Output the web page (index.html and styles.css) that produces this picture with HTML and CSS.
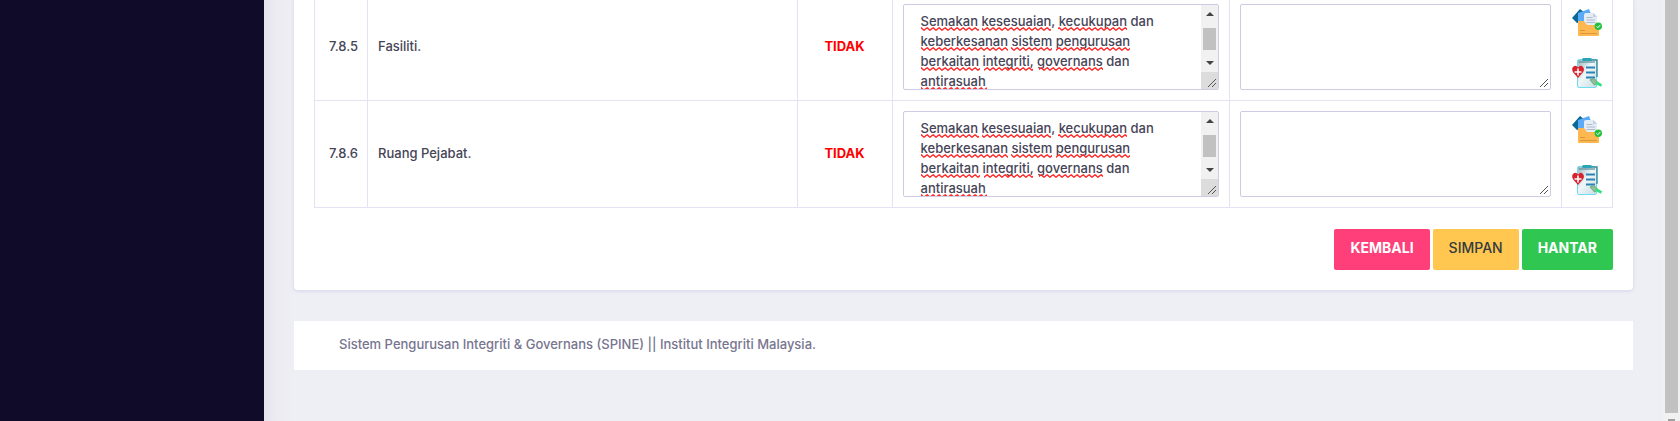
FILE: index.html
```
<!DOCTYPE html>
<html lang="ms">
<head>
<meta charset="utf-8">
<title>SPINE</title>
<link rel="stylesheet" href="styles.css">
</head>
<body>
<svg class="defs" aria-hidden="true">
  <defs>
    <pattern id="wave" width="6" height="4" patternUnits="userSpaceOnUse">
      <path d="M-1.500 .8Q0 .8 1.500 2T3 3.200T4.500 2T6 .8M0 .8Q.8 .8 1.500 2" fill="none" stroke="#f22" stroke-width="1.400"/>
    </pattern>
    <linearGradient id="sheet" x1="0" y1="0" x2="1" y2="1">
      <stop offset="0" stop-color="#8fb4bd"/><stop offset=".45" stop-color="#eef6f8"/><stop offset="1" stop-color="#c9dde3"/>
    </linearGradient>
    <symbol id="folder" viewBox="0 0 30 30">
      <path d="M0 11L8 2l5 4-3 9-5 1z" fill="#0a6796"/>
      <path d="M6 6l11-4 4 10-11 6H6z" fill="#5aaaf8"/>
      <path d="M12 8q0-2 2-2h8l3 3v11H12z" fill="#e4ecf5"/>
      <path d="M21 6l4 4h-4z" fill="#c2d0e0"/>
      <path d="M14.500 10.500h6M14.500 13h8.500M14.500 15.500h8.500" stroke="#aebccb"/>
      <path d="M6 15q0-1 1-1h5l3 4h11q1 0 1 1v9q0 1-1 1H7q-1 0-1-1z" fill="#ffb74f"/>
      <path d="M8 23.500h5M8 26.500h17" stroke="#d9963a"/>
      <circle cx="26.300" cy="19.300" r="3.700" fill="#22c03c"/>
      <path d="M24.500 19.300l1.400 1.400 2.500-2.800" fill="none" stroke="#fff"/>
    </symbol>
    <symbol id="report" viewBox="0 0 30 30">
      <rect x="5.500" y="1.500" width="19" height="28" rx="1.500" fill="url(#sheet)" stroke="#6fdcef"/>
      <path d="M7 4h16" stroke="#5f8d97" stroke-width="2" opacity=".6"/>
      <path d="M15 2h10v17" fill="none" stroke="#3b8c9c" stroke-width="1.400"/>
      <rect x="10" y="0" width="10" height="3" rx="1.500" fill="#2aa5b8"/>
      <path d="M14 9.500h9M14 14.500h9M14 19.500h9" stroke="#2a83b5" stroke-width="2"/>
      <path d="M6 20L1.200 14.500Q-.8 11 1 9q3-2.500 5 .5Q8.500 6.500 11 9q2 2.500-.2 5.500z" fill="#d8232f"/>
      <path d="M6 10.500v7M2.500 14h7" stroke="#fff" stroke-width="1.600"/>
      <path d="M18 22l4-1.500 4 4-3.500 2.500z" fill="#8fbf9a" stroke="#6fa77c"/>
      <path d="M24 24.500l5.500 3" stroke="#2fe07c" stroke-width="2.800"/>
    </symbol>
    <symbol id="grip" viewBox="0 0 10 10">
      <path d="M1 9L9 1M5 9l4-4" stroke="#555" fill="none"/>
    </symbol>
  </defs>
</svg>
<div class="app">
  <aside class="sidebar"></aside>
  <main class="content">
    <section class="card">
      <table class="items">
        <colgroup>
          <col class="col-no"><col><col class="col-status"><col class="col-note"><col class="col-reply"><col class="col-actions">
        </colgroup>
        <tbody>
          <tr>
            <td class="number">7.8.5</td>
            <td class="text">Fasiliti.</td>
            <td class="status">TIDAK</td>
            <td>
              <div class="field">
                <textarea class="input note" aria-label="Catatan 7.8.5" spellcheck="false">Semakan kesesuaian, kecukupan dan
keberkesanan sistem pengurusan
berkaitan integriti, governans dan
antirasuah</textarea>
                <svg class="marks" aria-hidden="true" fill="url(#wave)"><rect x="0" y="16" width="58" height="4"/><rect x="61" y="16" width="69" height="4"/><rect x="137" y="16" width="69" height="4"/><rect x="0" y="36" width="87" height="4"/><rect x="90" y="36" width="41" height="4"/><rect x="135" y="36" width="74" height="4"/><rect x="0" y="56" width="59" height="4"/><rect x="63" y="56" width="49" height="4"/><rect x="118" y="56" width="64" height="4"/><rect x="0" y="76" width="66" height="4"/></svg>
                <div class="bar" aria-hidden="true"><i class="up"></i><i class="thumb"></i><i class="down"></i><span class="corner"><svg class="grip"><use href="#grip"/></svg></span></div>
              </div>
            </td>
            <td>
              <div class="field">
                <textarea class="input" aria-label="Ulasan 7.8.5"></textarea>
                <svg class="grip grip-over" aria-hidden="true"><use href="#grip"/></svg>
              </div>
            </td>
            <td>
              <div class="actions">
                <button type="button" class="icon" aria-label="Dokumen"><svg><use href="#folder"/></svg></button>
                <button type="button" class="icon" aria-label="Laporan"><svg><use href="#report"/></svg></button>
              </div>
            </td>
          </tr>
          <tr>
            <td class="number">7.8.6</td>
            <td class="text">Ruang Pejabat.</td>
            <td class="status">TIDAK</td>
            <td>
              <div class="field">
                <textarea class="input note" aria-label="Catatan 7.8.6" spellcheck="false">Semakan kesesuaian, kecukupan dan
keberkesanan sistem pengurusan
berkaitan integriti, governans dan
antirasuah</textarea>
                <svg class="marks" aria-hidden="true" fill="url(#wave)"><rect x="0" y="16" width="58" height="4"/><rect x="61" y="16" width="69" height="4"/><rect x="137" y="16" width="69" height="4"/><rect x="0" y="36" width="87" height="4"/><rect x="90" y="36" width="41" height="4"/><rect x="135" y="36" width="74" height="4"/><rect x="0" y="56" width="59" height="4"/><rect x="63" y="56" width="49" height="4"/><rect x="118" y="56" width="64" height="4"/><rect x="0" y="76" width="66" height="4"/></svg>
                <div class="bar" aria-hidden="true"><i class="up"></i><i class="thumb"></i><i class="down"></i><span class="corner"><svg class="grip"><use href="#grip"/></svg></span></div>
              </div>
            </td>
            <td>
              <div class="field">
                <textarea class="input" aria-label="Ulasan 7.8.6"></textarea>
                <svg class="grip grip-over" aria-hidden="true"><use href="#grip"/></svg>
              </div>
            </td>
            <td>
              <div class="actions">
                <button type="button" class="icon" aria-label="Dokumen"><svg><use href="#folder"/></svg></button>
                <button type="button" class="icon" aria-label="Laporan"><svg><use href="#report"/></svg></button>
              </div>
            </td>
          </tr>
        </tbody>
      </table>
      <div class="buttons">
        <button type="button" class="btn danger">KEMBALI</button>
        <button type="button" class="btn warning">SIMPAN</button>
        <button type="button" class="btn success">HANTAR</button>
      </div>
    </section>
    <footer class="footer">Sistem Pengurusan Integriti &amp; Governans (SPINE) || Institut Integriti Malaysia.</footer>
  </main>
  <div class="page-bar" aria-hidden="true"><i class="page-thumb"></i><i class="page-down"></i></div>
</div>
</body>
</html>
```
FILE: styles.css
```
* { box-sizing: border-box; }
body {
  margin: 0;
  background: #eeeff5;
  color: #464457;
  font: 500 13px/20px Inter, "Liberation Sans", sans-serif;
}
.defs { position: absolute; width: 0; height: 0; }
.app { display: flex; height: 100vh; overflow: hidden; }
.sidebar { flex: 0 0 264px; background: #0f0b28; }
.content {
  flex: 1;
  min-width: 0;
  padding: 0 30px;
  background: linear-gradient(90deg, #e7e5ef, #ebebf1 12px, #eeeff5 30px);
}
.card {
  padding: 0 20px 20px;
  background: #fff;
  border-radius: 0 0 4px 4px;
  box-shadow: 0 1px 3px 1px #dcdcee;
}
.items { width: 100%; table-layout: fixed; border-collapse: collapse; }
.items td { padding: 10px; border: 1px solid #e4e2f3; }
.items tr:first-child td { padding-top: 4px; border-top: 0; }
.items .number, .items .text, .items .status { padding-bottom: 12px; }
.items tr:first-child .number, .items tr:first-child .text, .items tr:first-child .status { padding-top: 4px; }
.col-no { width: 53px; }
.col-status { width: 95px; }
.col-note { width: 26%; }
.col-reply { width: 332px; }
.col-actions { width: 51px; }
.items .number { padding-left: 13px; padding-right: 8px; text-align: center; }
.items .status { text-align: center; color: #f00; font-weight: 700; }
.field { position: relative; display: flex; height: 86px; border: 1px solid #cecbe2; border-radius: 2px; overflow: hidden; }
.input {
  flex: 1;
  min-width: 0;
  padding: 6px 17px 0;
  border: 0;
  outline: 0;
  background: transparent;
  color: inherit;
  font: inherit;
  resize: none;
}
.note { overflow: hidden; white-space: pre; }
.marks { position: absolute; left: 17px; top: 6px; width: 240px; height: 78px; pointer-events: none; }
.bar { display: flex; flex-direction: column; align-items: center; width: 17px; background: #f1f1f1; }
.up, .down { border: 4px solid transparent; }
.up { margin-top: 3px; border-bottom-color: #444; }
.down { border-top-color: #444; }
.thumb { width: 13px; height: 22px; margin: 12px 0 11px; background: #c1c1c1; }
.corner { display: flex; align-items: flex-end; justify-content: flex-end; width: 17px; height: 17px; margin-top: auto; padding: 1px; background: #dcdcdc; }
.grip { width: 10px; height: 10px; }
.grip-over { position: absolute; right: 1px; bottom: 1px; pointer-events: none; }
.actions { display: flex; flex-direction: column; align-items: center; gap: 21px; }
.icon { display: block; width: 30px; height: 30px; padding: 0; border: 0; background: none; cursor: pointer; }
.icon svg { display: block; width: 30px; height: 30px; }
.buttons { display: flex; justify-content: flex-end; gap: 3px; margin-top: 21px; }
.btn { padding: 9px 16px 12px; border: 0; border-radius: 2px; color: #fff; font: inherit; font-size: 14px; font-weight: 700; cursor: pointer; }
.danger { background: #ff3f7a; }
.warning { background: #ffc750; color: #343a40; font-weight: 500; }
.success { background: #2fc752; }
.footer { margin-top: 31px; padding: 13px 45px 16px; background: #fff; color: #77758f; }
.page-bar { display: flex; flex-direction: column; align-items: center; flex: 0 0 17px; background: #f1f1f1; }
.page-thumb { flex: 1; width: 13px; background: #c1c1c1; }
.page-down { height: 2px; width: 7px; margin-top: 6px; background: #a0a0a0; }
```
